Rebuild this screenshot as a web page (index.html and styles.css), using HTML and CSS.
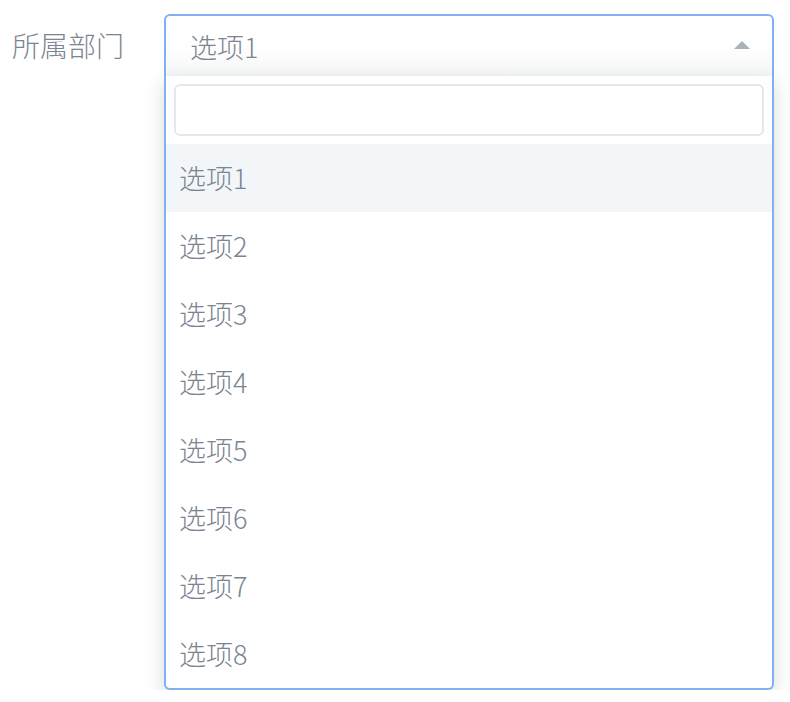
FILE: index.html
```html
<!DOCTYPE html>
<html lang="zh">
<head>
  <meta charset="UTF-8">
  <title>所属部门</title>
  <link rel="stylesheet" href="styles.css">
</head>
<body>

<div class="field">
  <label class="field-label">所属部门</label>

  <div class="select">
    <div class="select-head">
      <span class="select-value">选项1</span>
      <span class="select-arrow"></span>
    </div>

    <div class="select-drop">
      <div class="search-wrap">
        <input type="text" class="search">
      </div>
      <ul class="options">
        <li class="option active">选项1</li>
        <li class="option">选项2</li>
        <li class="option">选项3</li>
        <li class="option">选项4</li>
        <li class="option">选项5</li>
        <li class="option">选项6</li>
        <li class="option">选项7</li>
        <li class="option">选项8</li>
      </ul>
    </div>
  </div>
</div>

</body>
</html>
```

FILE: styles.css
```css
body {
  margin: 0;
  font-family: "Noto Sans CJK SC", "Noto Sans", sans-serif;
  background: #fff;
  color: #7b8590;
}

.field {
  display: flex;
  align-items: flex-start;
  padding: 14px 0 0 12px;
}

.field-label {
  width: 152px;
  font-size: 28px;
  font-weight: 300;
  line-height: 62px;
  color: #7c8590;
}

.select {
  width: 610px;
}

.select-head {
  display: flex;
  align-items: center;
  justify-content: space-between;
  height: 60px;
  padding: 0 22px 0 24px;
  border: 2px solid #82b1f2;
  border-bottom: none;
  border-radius: 6px 6px 0 0;
  background: linear-gradient(#fff 45%, #f6f7f8);
}

.select-value {
  font-size: 27px;
  font-weight: 300;
  color: #7b8591;
}

.select-arrow {
  width: 0;
  height: 0;
  border-left: 8px solid transparent;
  border-right: 8px solid transparent;
  border-bottom: 8px solid #a8b1b9;
  margin-top: -2px;
}

.select-drop {
  border: 2px solid #82b1f2;
  border-top: none;
  border-radius: 0 0 6px 6px;
  background: #fff;
  box-shadow: 0 6px 20px rgba(0,0,0,0.15);
}

.search-wrap {
  padding: 8px;
}

.search {
  display: block;
  box-sizing: border-box;
  width: 100%;
  height: 52px;
  border: 2px solid #e3e8ee;
  border-radius: 6px;
  outline: none;
}

.options {
  list-style: none;
  margin: 0;
  padding: 0;
}

.option {
  height: 68px;
  line-height: 68px;
  padding-left: 13px;
  font-size: 27px;
  font-weight: 300;
  color: #7b8591;
}

.option.active {
  background: #f3f6f9;
}
```
